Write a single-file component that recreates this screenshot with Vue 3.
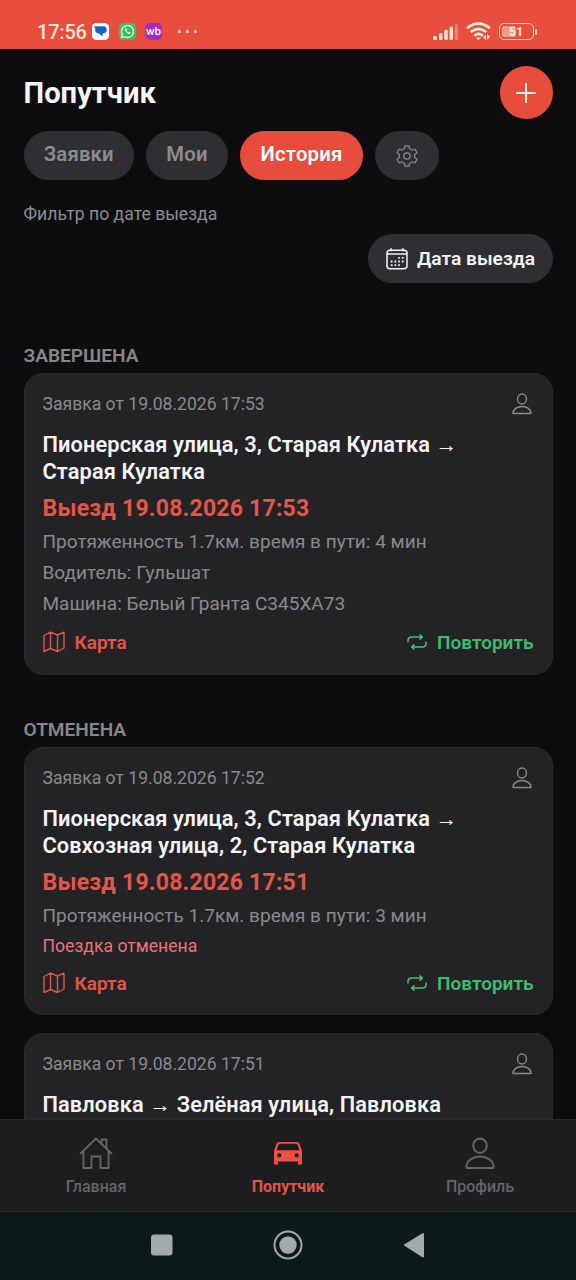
<script setup>
const tabs = [
  { label: 'Заявки', cls: 'tab-requests' },
  { label: 'Мои', cls: 'tab-mine' },
  { label: 'История', cls: 'tab-history active' },
]

const sections = [
  {
    title: 'ЗАВЕРШЕНА',
    rides: [
      {
        created: 'Заявка от 19.08.2026 17:53',
        route: ['Пионерская улица, 3, Старая Кулатка →', 'Старая Кулатка'],
        departure: 'Выезд 19.08.2026 17:53',
        info: [
          { text: 'Протяженность 1.7км. время в пути: 4 мин', cls: 'distance' },
          { text: 'Водитель: Гульшат', cls: 'driver' },
          { text: 'Машина: Белый Гранта С345ХА73', cls: 'vehicle' },
        ],
      },
    ],
  },
  {
    title: 'ОТМЕНЕНА',
    rides: [
      {
        created: 'Заявка от 19.08.2026 17:52',
        route: ['Пионерская улица, 3, Старая Кулатка →', 'Совхозная улица, 2, Старая Кулатка'],
        departure: 'Выезд 19.08.2026 17:51',
        info: [{ text: 'Протяженность 1.7км. время в пути: 3 мин', cls: 'distance' }],
        cancelled: 'Поездка отменена',
      },
      {
        created: 'Заявка от 19.08.2026 17:51',
        route: ['Павловка → Зелёная улица, Павловка'],
        info: [],
      },
    ],
  },
]
</script>

<template>
  <div class="screen">
    <header class="status">
      <span class="clock">17:56</span>
      <svg class="app-icon" viewBox="0 0 17 17">
        <rect width="17" height="17" rx="4.5" fill="#fff" />
        <path d="M2 3.2H11.5a3.6 3.6 0 0 1 .5 7.1l-1.2.1-.6 3-3.3-3H6.5A3.4 3.4 0 0 1 3.3 6Z" fill="#1664c8" />
      </svg>
      <svg class="app-icon" viewBox="0 0 17 17">
        <rect width="17" height="17" rx="4.5" fill="#38c05f" />
        <path d="M2.4 14.6l.9-3.2a6 6 0 1 1 2.3 2.3Z" fill="none" stroke="#e9ffe9" stroke-width="1.3" />
        <path d="M6.2 5.2c-1 1 .2 3.1 1.3 4.2s3 2.2 4 1.2c.7-.8-.9-1.8-1.5-1.6l-.6.6c-.8-.3-1.7-1.2-2-2l.5-.7c.2-.7-.9-2.3-1.7-1.7Z" fill="#e9ffe9" />
      </svg>
      <span class="wb">wb</span>
      <span class="more"><i></i><i></i><i></i></span>
      <svg class="signal" viewBox="0 0 26 18">
        <g fill="#ffe6cf">
          <rect x="0" y="13" width="4" height="4" rx="1.5" />
          <rect x="6" y="10" width="3.5" height="7" rx="1.5" />
          <rect x="11.3" y="6.5" width="3.5" height="10.5" rx="1.5" />
          <rect x="16.5" y="3.5" width="3.5" height="13.5" rx="1.5" />
          <rect x="21.8" y="1" width="3" height="16" rx="1.2" opacity=".4" />
        </g>
      </svg>
      <svg class="wifi" viewBox="0 0 25 19">
        <g fill="none" stroke="#fff0dc" stroke-width="2.6">
          <path d="M1 6.2Q12.5-3 24 6.2" />
          <path d="M4.7 10.1Q12.5 3.7 20.3 10.1" />
          <path d="M8.3 13.7Q12.5 10.2 16.7 13.7" />
        </g>
        <path d="M9.8 15.5h5.2L12.4 18.3Z" fill="#fff0dc" />
        <path d="M17 15.5l3-3V18ZM24 14.5l-2.8 3.5v-6Z" fill="#fff0dc" />
      </svg>
      <div class="battery"><i class="charge"></i><span>51</span></div>
      <i class="battery-tip"></i>
    </header>

    <main class="content">
      <div class="title-row">
        <h1>Попутчик</h1>
        <button class="add" aria-label="Добавить">
          <svg viewBox="0 0 22 22"><path d="M11 1v20M1 11h20" stroke="#fff3e8" stroke-width="2" /></svg>
        </button>
      </div>

      <nav class="tabs">
        <button v-for="tab in tabs" :key="tab.label" class="tab" :class="tab.cls"><span>{{ tab.label }}</span></button>
        <button class="tab tab-settings" aria-label="Настройки">
          <svg viewBox="0 0 22 22">
            <path d="M8.8.8h4.4l.3 2.8 2.7 1.6L18.8 4 21 7.8 18.6 9.4v3.2L21 14.2 18.8 18 16.2 16.8 13.5 18.4l-.3 2.8H8.8l-.3-2.8L5.8 16.8 3.2 18 1 14.2 3.4 12.6V9.4L1 7.8 3.2 4 5.8 5.2 8.5 3.6Z" fill="none" stroke="#8c8c91" stroke-width="1.2" stroke-linejoin="round" />
            <circle cx="11" cy="11" r="3.2" fill="none" stroke="#8c8c91" stroke-width="1.3" />
          </svg>
        </button>
      </nav>

      <p class="filter-label"><span>Фильтр по дате выезда</span></p>
      <div class="filter-row">
        <button class="date-button">
          <svg viewBox="0 0 22 22">
            <rect x="1" y="2.3" width="20" height="18.4" rx="3" fill="none" stroke="#f4f4f6" stroke-width="1.5" />
            <path d="M1 6h20M5 .2v3M17 .2v3" stroke="#f4f4f6" stroke-width="1.6" />
            <path d="M12.2 9.8h1.7M15.9 9.8h1.7M4.8 13.5h1.7M8.5 13.5h1.7M12.2 13.5h1.7M15.9 13.5h1.7M4.8 17.1h1.7M8.5 17.1h1.7M12.2 17.1h1.7" stroke="#f4f4f6" stroke-width="1.8" />
          </svg>
          <span>Дата выезда</span>
        </button>
      </div>

      <section v-for="section in sections" :key="section.title" class="section">
        <h2><span>{{ section.title }}</span></h2>
        <article v-for="ride in section.rides" :key="ride.created" class="card">
          <div class="card-head">
            <span class="created">{{ ride.created }}</span>
            <svg class="person" viewBox="0 0 20 22">
              <g fill="none" stroke="#89898d" stroke-width="1.4">
                <ellipse cx="10" cy="6" rx="4.5" ry="5" />
                <path d="M1 20.5C.8 16 5.3 13.5 10 13.5s9.2 2.5 9 7Z" stroke-linejoin="round" />
              </g>
            </svg>
          </div>
          <h3><span v-for="line in ride.route" :key="line">{{ line }}</span></h3>
          <template v-if="ride.departure">
            <p class="departure">{{ ride.departure }}</p>
            <p v-for="item in ride.info" :key="item.cls" class="info" :class="item.cls">{{ item.text }}</p>
            <p v-if="ride.cancelled" class="cancelled">{{ ride.cancelled }}</p>
            <div class="actions">
              <button class="map">
                <svg viewBox="0 0 22 22">
                  <path d="M1 4.5 7.5 1.2 14.5 4 21 1.2V17L14.5 20.5 7.5 17.5 1 20.5ZM7.5 1.5v16M14.5 4v16.5" fill="none" stroke="#d8594e" stroke-width="1.4" stroke-linejoin="round" />
                </svg>
                <span>Карта</span>
              </button>
              <button class="repeat">
                <svg viewBox="0 0 20 16">
                  <path d="M1 8.5V6.5q0-3.5 3.5-3.5H15M12.5.5 15.3 3 12.5 5.6M19 7.5v2q0 3.5-3.5 3.5H5M7.5 10.4 4.7 13l2.8 2.5" fill="none" stroke="#45c17c" stroke-width="1.5" />
                </svg>
                <span>Повторить</span>
              </button>
            </div>
          </template>
        </article>
      </section>
    </main>

    <nav class="bottom-nav">
      <div class="nav-item home">
        <svg viewBox="0 0 34 32">
          <path d="M1 17 17 1.5 33 17M4.5 14v17h8V19.5h9V31h8V14M22.5 6.5V2.5h5V11.5" fill="none" stroke="#656568" stroke-width="1.8" />
        </svg>
        <span>Главная</span>
      </div>
      <div class="nav-item current">
        <svg viewBox="0 0 34 32">
          <path fill-rule="evenodd" d="M8 5h18q1.8 0 2.4 1.7L31 13.5V27.5h-4.2v-3H7.2v3H3V13.5L5.6 6.7Q6.2 5 8 5ZM8 6.8 5.5 13.3h23L26 6.8ZM8.3 16.3a2.1 2.1 0 1 0 0 4.2 2.1 2.1 0 0 0 0-4.2ZM25.7 16.3a2.1 2.1 0 1 0 0 4.2 2.1 2.1 0 0 0 0-4.2Z" fill="#ec5140" />
        </svg>
        <span>Попутчик</span>
      </div>
      <div class="nav-item profile">
        <svg viewBox="0 0 34 32">
          <g fill="none" stroke="#656568" stroke-width="1.9">
            <ellipse cx="17" cy="8.7" rx="6.8" ry="7.2" />
            <path d="M3.7 31C2.5 24.5 9.5 19.5 17 19.5S31.5 24.5 30.3 31Z" stroke-linejoin="round" />
          </g>
        </svg>
        <span>Профиль</span>
      </div>
    </nav>

    <footer class="system-nav">
      <svg viewBox="0 0 30 30"><rect x="4" y="4.5" width="21.5" height="21" rx="3" fill="#a2aaab" /></svg>
      <svg viewBox="0 0 30 30">
        <circle cx="15" cy="15" r="13.5" fill="none" stroke="#a2aaab" stroke-width="2" />
        <circle cx="15" cy="15" r="8.7" fill="#a2aaab" />
      </svg>
      <svg viewBox="0 0 30 30"><path d="M6 15 24 4v22.5Z" fill="#a2aaab" stroke="#a2aaab" stroke-width="2" stroke-linejoin="round" /></svg>
    </footer>
  </div>
</template>

<style>
body { margin: 0; background: #0d0d0f; }
</style>

<style scoped>
.screen {
  width: 576px; height: 1280px; overflow: hidden; display: flex; flex-direction: column;
  background: #0d0d0f; color: #f5f5f7; font-family: Roboto, "Noto Sans", sans-serif;
}
* { box-sizing: border-box; }
h1, h2, h3, p { margin: 0; }
button { border: 0; padding: 0; margin: 0; font: inherit; color: inherit; background: none; display: flex; align-items: center; }
span { white-space: nowrap; }
svg { display: block; flex: none; }

.status { height: 48.5px; flex: none; background: #e94d3d; display: flex; align-items: center; padding: 15px 0 0 37px; }
.clock { width: 50px; font-size: 20px; line-height: 24px; font-weight: 500; letter-spacing: -.2px; color: #ffe8d5; }
.app-icon { width: 17px; height: 17px; margin: 0 9px 0 5px; }
.app-icon + .app-icon { margin: 0 9px 0 1px; }
.wb { width: 17px; height: 17px; border-radius: 5px; background: #a52bc9; color: #fff; font-size: 11.5px; font-weight: 500; line-height: 16px; text-align: center; }
.more { display: flex; gap: 5px; margin-left: 16px; }
.more i { width: 3px; height: 3px; border-radius: 50%; background: #ffdcc8; }
.signal { width: 26px; height: 18px; margin-left: auto; }
.wifi { width: 25px; height: 19px; margin-left: 6.5px; }
.battery { position: relative; width: 35px; height: 17px; margin-left: 8px; border: 1.5px solid #ffdfca; border-radius: 5px; text-align: center; font-size: 12.5px; font-weight: 700; line-height: 15px; color: #fff0dc; overflow: hidden; }
.battery span { position: relative; }
.charge { position: absolute; left: 2px; top: 2px; bottom: 2px; width: 14px; border-radius: 2px; background: #f59b89; }
.battery-tip { width: 2.5px; height: 6px; margin: 0 39px 0 1px; background: #ffdfca; border-radius: 1px; }

.content { height: 1070px; flex: none; overflow: hidden; padding: 17.5px 23.5px 0; }
.title-row { height: 53px; display: flex; align-items: center; justify-content: space-between; }
h1 { font-size: 29.2px; line-height: 34px; font-weight: 700; color: #f5f5f7; }
.add { width: 53px; height: 53px; border-radius: 50%; background: #e84c3c; justify-content: center; }
.add svg { width: 22px; height: 22px; }

.tabs { display: flex; gap: 12px; margin-top: 12px; }
.tab { height: 49px; border-radius: 25px; background: #2f2f33; color: #8c8c91; justify-content: center; font-size: 20.3px; line-height: 24px; letter-spacing: .2px; font-weight: 600; }
.tab span { margin-top: -3px; }
.tab-requests { width: 110.5px; }
.tab-mine { width: 82px; }
.tab-history { width: 123px; }
.tab-settings { width: 64px; }
.tab-settings svg { width: 22px; height: 22px; }
.tab.active { background: #e84c3c; color: #fff; }

.filter-label { margin-top: 23px; font-size: 17.6px; line-height: 22px; color: #8c8c91; }
.filter-row { display: flex; justify-content: flex-end; margin-top: 9px; }
.date-button { width: 185px; height: 49px; border-radius: 25px; background: #2f2f33; padding-left: 18.5px; gap: 9px; font-size: 19.2px; font-weight: 600; }
.date-button svg { width: 22px; height: 22px; }

.section { margin-top: 61px; }
.section + .section { margin-top: 43.5px; }
h2 { height: 24px; font-size: 19.1px; line-height: 24px; font-weight: 600; color: #87878b; }
h2 + .card { margin-top: 5px; }
.card + .card { margin-top: 18px; }
.card { border: 1px solid #2b2b2d; border-radius: 19px; background: #232325; padding: 18px 18px 18.5px; }
.card-head { height: 24px; display: flex; align-items: center; justify-content: space-between; }
.created { font-size: 17.58px; color: #8a8a8e; }
.person { width: 20px; height: 22px; margin-right: 2px; }
h3 { margin-top: 15px; font-size: 21.8px; line-height: 27px; letter-spacing: .1px; font-weight: 600; color: #f5f5f7; }
h3 span { display: block; }
.departure { margin-top: 10px; font-size: 23px; line-height: 28px; letter-spacing: .22px; font-weight: 700; color: #e85447; white-space: nowrap; }
.info { margin-top: 6px; font-size: 19px; line-height: 25px; letter-spacing: .02px; color: #8a8a8e; white-space: nowrap; }
.cancelled { margin-top: 6.5px; font-size: 17.6px; line-height: 22px; color: #ea7379; }
.actions { display: flex; justify-content: space-between; height: 24px; margin-top: 14px; padding-bottom: 0; margin-bottom: 1px; font-size: 19px; font-weight: 600; }
.cancelled + .actions { margin-top: 14.5px; margin-bottom: 0; }
.map { gap: 9.5px; color: #e2564a; }
.map svg { width: 22px; height: 22px; margin-left: .5px; }
.repeat { gap: 10px; color: #3bbd72; }
.repeat svg { width: 20px; height: 16px; }

.bottom-nav { height: 92px; flex: none; display: flex; background: #1d1d1f; border-top: 1px solid #29292c; }
.nav-item { flex: 1; display: flex; flex-direction: column; align-items: center; padding-top: 17px; font-size: 16px; line-height: 20px; font-weight: 500; color: #656568; }
.nav-item svg { width: 34px; height: 32px; }
.nav-item span { margin-top: 8px; }
.nav-item.current { color: #e2564a; font-weight: 700; }
.system-nav { height: 69.5px; flex: none; display: flex; align-items: center; justify-content: center; gap: 96px; padding-bottom: 1.5px; background: #0c1819; border-top: 1px solid #203033; }
.system-nav svg { width: 30px; height: 30px; }
</style>
